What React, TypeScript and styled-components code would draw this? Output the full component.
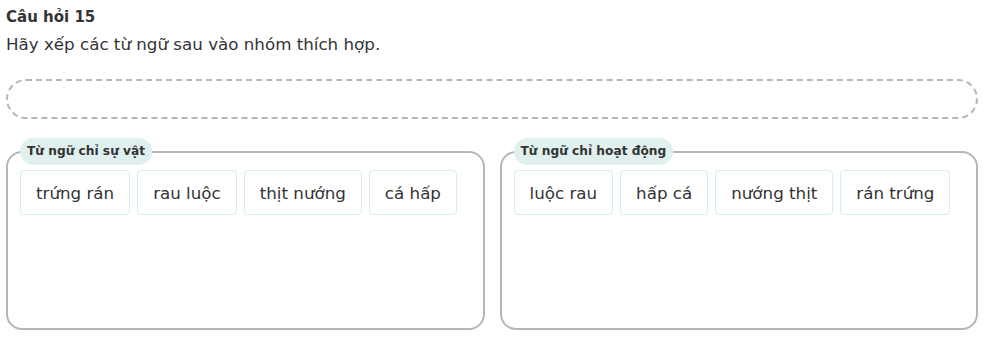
import React from "react";
import styled, { createGlobalStyle } from "styled-components";

const Global = createGlobalStyle`
  html, body { margin: 0; padding: 0; background: #fff; }
  body {
    font-family: "DejaVu Sans", Verdana, sans-serif;
    color: #333;
  }
`;

const Page = styled.div`
  padding: 6px 9px 0 6px;
`;

const Title = styled.div`
  font-size: 15px;
  font-weight: bold;
  line-height: 22px;
  color: #333;
`;

const Prompt = styled.div`
  font-size: 16.7px;
  line-height: 24px;
  color: #333;
  margin-top: 4px;
`;

const DropZone = styled.div`
  margin-top: 23px;
  height: 40px;
  box-sizing: border-box;
  border: 2px dashed #b3b6bb;
  border-radius: 20px;
`;

const Groups = styled.div`
  display: grid;
  grid-template-columns: 1fr 1fr;
  gap: 15px;
  margin-top: 19px;
`;

const Group = styled.fieldset`
  margin: 0;
  min-width: 0;
  padding: 5px 12px 12px;
  border: 2px solid #b3b6bb;
  border-radius: 16px;
`;

const Legend = styled.legend`
  padding: 0 7px;
  height: 27px;
  line-height: 27px;
  border-radius: 14px;
  background: #dff0ee;
  font-size: 12.2px;
  font-weight: bold;
  color: #333;
`;

const Chips = styled.div`
  display: flex;
  flex-wrap: wrap;
  align-content: flex-start;
  gap: 7px;
  min-height: 146px;
`;

const Chip = styled.div`
  height: 45px;
  box-sizing: border-box;
  padding: 0 15px;
  display: flex;
  align-items: center;
  border: 1px solid #d6eded;
  border-radius: 4px;
  font-size: 16.7px;
  color: #333;
  background: #fff;
`;

const groups = [
  { label: "Từ ngữ chỉ sự vật", items: ["trứng rán", "rau luộc", "thịt nướng", "cá hấp"] },
  { label: "Từ ngữ chỉ hoạt động", items: ["luộc rau", "hấp cá", "nướng thịt", "rán trứng"] },
];

export default function App() {
  return (
    <>
      <Global />
      <Page>
        <Title>Câu hỏi 15</Title>
        <Prompt>Hãy xếp các từ ngữ sau vào nhóm thích hợp.</Prompt>
        <DropZone />
        <Groups>
          {groups.map((g) => (
            <Group key={g.label}>
              <Legend>{g.label}</Legend>
              <Chips>
                {g.items.map((it) => (
                  <Chip key={it}>{it}</Chip>
                ))}
              </Chips>
            </Group>
          ))}
        </Groups>
      </Page>
    </>
  );
}
